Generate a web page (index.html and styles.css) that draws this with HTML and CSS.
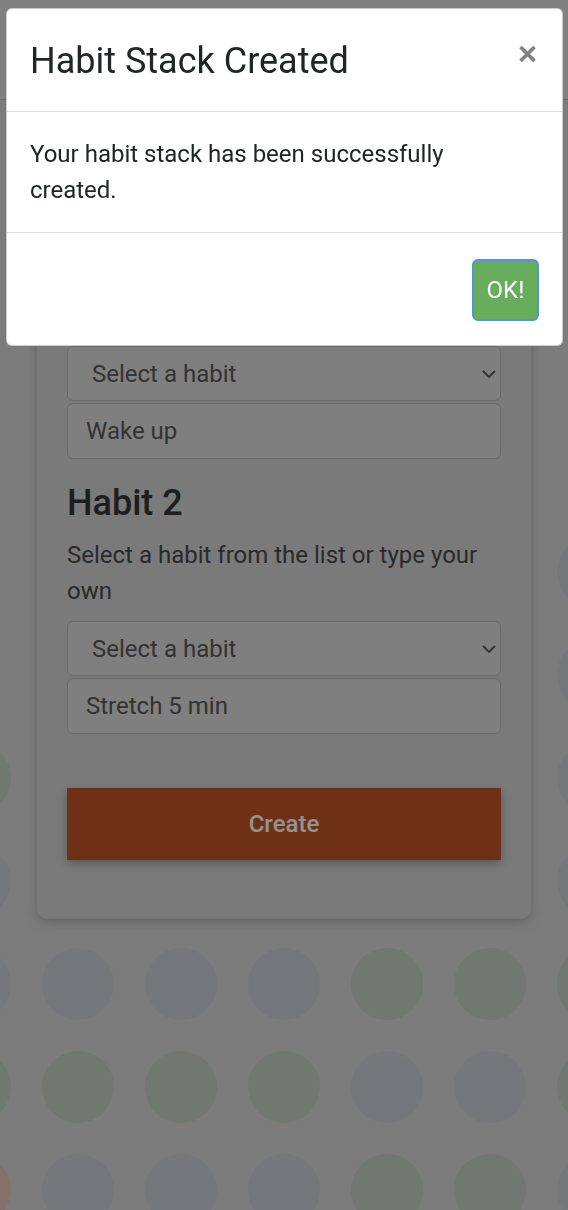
FILE: index.html
```html
<!DOCTYPE html>
<html lang="en">
<head>
<meta charset="utf-8">
<title>Habit Stack</title>
<link rel="stylesheet" href="styles.css">
</head>
<body>
<div class="dots" aria-hidden="true">
  <i class="dot x"></i><i class="dot g"></i><i class="dot g"></i><i class="dot g"></i><i class="dot g"></i><i class="dot g"></i><i class="dot x"></i>
  <i class="dot x"></i><i class="dot g"></i><i class="dot g"></i><i class="dot g"></i><i class="dot g"></i><i class="dot g"></i><i class="dot x"></i>
  <i class="dot x"></i><i class="dot g"></i><i class="dot g"></i><i class="dot g"></i><i class="dot g"></i><i class="dot g"></i><i class="dot x"></i>
  <i class="dot x"></i><i class="dot g"></i><i class="dot g"></i><i class="dot g"></i><i class="dot g"></i><i class="dot g"></i><i class="dot x"></i>
  <i class="dot x"></i><i class="dot g"></i><i class="dot g"></i><i class="dot g"></i><i class="dot g"></i><i class="dot g"></i><i class="dot x"></i>
  <i class="dot x"></i><i class="dot g"></i><i class="dot g"></i><i class="dot g"></i><i class="dot g"></i><i class="dot g"></i><i class="dot g"></i>
  <i class="dot x"></i><i class="dot g"></i><i class="dot g"></i><i class="dot g"></i><i class="dot g"></i><i class="dot g"></i><i class="dot g"></i>
  <i class="dot n"></i><i class="dot g"></i><i class="dot g"></i><i class="dot g"></i><i class="dot g"></i><i class="dot g"></i><i class="dot g"></i>
  <i class="dot g"></i><i class="dot g"></i><i class="dot g"></i><i class="dot g"></i><i class="dot g"></i><i class="dot g"></i><i class="dot g"></i>
  <i class="dot g"></i><i class="dot g"></i><i class="dot g"></i><i class="dot g"></i><i class="dot n"></i><i class="dot n"></i><i class="dot n"></i>
  <i class="dot n"></i><i class="dot n"></i><i class="dot n"></i><i class="dot n"></i><i class="dot g"></i><i class="dot g"></i><i class="dot n"></i>
  <i class="dot o"></i><i class="dot g"></i><i class="dot g"></i><i class="dot g"></i><i class="dot n"></i><i class="dot n"></i><i class="dot g"></i>
</div>

<header class="navbar"></header>

<main class="page">
  <section class="card">
    <div class="group">
      <h4 class="habit-title">Habit 1</h4>
      <p class="hint">Select a habit from the list or type your own</p>
      <div class="select-wrap">
        <select class="field select"><option>Select a habit</option></select>
        <svg class="chev" viewBox="0 0 14 8" aria-hidden="true"><path d="M1 1 L7 7 L13 1" fill="none" stroke="#555" stroke-width="1.8"/></svg>
      </div>
      <input class="field" type="text" value="Wake up">
    </div>
    <div class="group">
      <h4 class="habit-title">Habit 2</h4>
      <p class="hint">Select a habit from the list or type your own</p>
      <div class="select-wrap">
        <select class="field select"><option>Select a habit</option></select>
        <svg class="chev" viewBox="0 0 14 8" aria-hidden="true"><path d="M1 1 L7 7 L13 1" fill="none" stroke="#555" stroke-width="1.8"/></svg>
      </div>
      <input class="field" type="text" value="Stretch 5 min">
    </div>
    <button class="create" type="button">Create</button>
  </section>
</main>

<div class="backdrop"></div>

<div class="modal" role="dialog">
  <div class="modal-header">
    <h5 class="modal-title">Habit Stack Created</h5>
    <button class="close" type="button" aria-label="Close">
      <svg viewBox="0 0 19 18" width="19" height="18"><path d="M2.5 2 L16.5 16 M16.5 2 L2.5 16" stroke="#808080" stroke-width="3.6" fill="none"/></svg>
    </button>
  </div>
  <div class="modal-body">
    <p>Your habit stack has been successfully created.</p>
  </div>
  <div class="modal-footer">
    <button class="ok" type="button">OK!</button>
  </div>
</div>
</body>
</html>
```

FILE: styles.css
```css
html, body {
  margin: 0;
  height: 100%;
  overflow: hidden;
}

body {
  position: relative;
  font-family: Roboto, "Noto Sans", Arial, sans-serif;
  background: #cdcfcd;
  color: #333;
}

/* decorative dotted background canvas */
.dots {
  position: absolute;
  top: 5.5px;
  left: -76.5px;
  display: grid;
  grid-template-columns: repeat(7, 103px);
  grid-auto-rows: 103px;
}

.dot {
  display: block;
  width: 72px;
  height: 72px;
  border-radius: 50%;
  place-self: center;
}

.dot.g { background: #c5c6cb; }
.dot.n { background: #bcc6bc; }
.dot.o { background: #dcbfb1; }
.dot.x { background: transparent; }

.navbar {
  position: relative;
  height: 99px;
  background: #d5d5d5;
  border-bottom: 1px solid #b8b8b8;
}

.page {
  position: relative;
  padding: 77px 37px 0;
}

.card {
  background: #cbcbcb;
  border-radius: 10px;
  box-shadow: 0 3px 12px rgba(0, 0, 0, 0.22);
  padding: 30px 30px 59px;
}

.group + .group {
  margin-top: 23px;
}

.habit-title {
  font-size: 36px;
  font-weight: 500;
  line-height: 1.2;
  margin: 0 0 12px;
  color: #333;
}

.hint {
  font-size: 24px;
  line-height: 36px;
  margin: 0 0 12px;
  color: #474747;
}

.select-wrap {
  position: relative;
}

.field {
  display: block;
  width: 100%;
  box-sizing: border-box;
  height: 56px;
  margin: 0;
  padding: 0 18px;
  font-family: Roboto, "Noto Sans", Arial, sans-serif;
  font-size: 24px;
  color: #555;
  background: #d4d4d4;
  border: 1px solid #b1b1b4;
  border-radius: 6px;
  outline: none;
}

.select {
  -webkit-appearance: none;
  appearance: none;
  height: 55px;
  padding-left: 24px;
}

.select-wrap + .field {
  margin-top: 2px;
}

.chev {
  position: absolute;
  right: 5px;
  top: 50%;
  width: 14px;
  height: 8px;
  margin-top: -4px;
  pointer-events: none;
}

.create {
  display: block;
  width: 100%;
  height: 72px;
  margin-top: 54px;
  border: 0;
  border-radius: 0;
  background: #b95225;
  color: #f4f4f4;
  font-family: Roboto, "Noto Sans", Arial, sans-serif;
  font-size: 24px;
  font-weight: 500;
  box-shadow: 0 4px 8px rgba(0, 0, 0, 0.25);
}

.backdrop {
  position: fixed;
  inset: 0;
  background: rgba(0, 0, 0, 0.4);
}

.modal {
  position: fixed;
  top: 8px;
  left: 6px;
  width: 557px;
  box-sizing: border-box;
  background: #fff;
  border: 1px solid rgba(0, 0, 0, 0.2);
  border-radius: 6px;
  color: #212529;
}

.modal-header {
  display: flex;
  justify-content: space-between;
  align-items: flex-start;
  padding: 25px 23px 23px;
  border-bottom: 1px solid #dee2e6;
}

.modal-title {
  margin: 0;
  font-size: 36px;
  line-height: 54px;
  font-weight: 400;
}

.close {
  margin: 11px 2px 0 0;
  padding: 0;
  border: 0;
  background: none;
  line-height: 0;
}

.modal-body {
  padding: 24px 23px;
}

.modal-body p {
  max-width: 470px;
  margin: 0;
  font-size: 24px;
  line-height: 36px;
}

.modal-footer {
  display: flex;
  justify-content: flex-end;
  padding: 26px 23px 24px;
  border-top: 1px solid #dee2e6;
}

.ok {
  width: 67px;
  height: 62px;
  padding: 0;
  background: #67ad5b;
  border: 2px solid #4f92e6;
  border-radius: 6px;
  color: #fff;
  font-family: Roboto, "Noto Sans", Arial, sans-serif;
  font-size: 24px;
}
```
